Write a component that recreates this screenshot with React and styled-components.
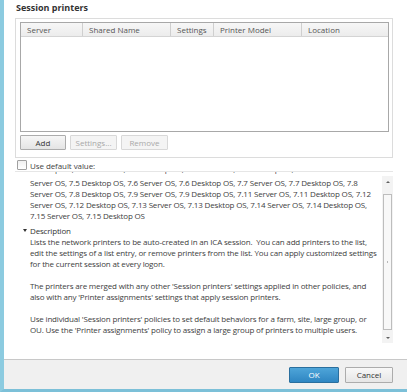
import React from 'react';
import styled, {createGlobalStyle} from 'styled-components';

const Global = createGlobalStyle`
  html, body {
    margin: 0;
    padding: 0;
    background: #ffffff;
  }
  * {
    box-sizing: border-box;
  }
`;

const Dialog = styled.div`
  width: 407px;
  height: 392px;
  display: flex;
  flex-direction: column;
  background: #ffffff;
  border-left: 4px solid #8ccbe0;
  border-bottom: 3px solid #7cc0d8;
  font-family: "Open Sans", "Noto Sans", sans-serif;
  font-size: 8px;
  color: #3a3a3a;
  overflow: hidden;
`;

const Body = styled.div`
  display: flex;
  flex-direction: column;
  padding: 2px 14px 0 11px;
`;

const Title = styled.div`
  font-weight: 700;
  font-size: 9px;
  line-height: 12px;
  color: #333;
  padding-left: 1px;
  height: 16px;
`;

const GroupBox = styled.div`
  border: 1px solid #dcdcdc;
  padding: 3px 3px 7px 4px;
  display: flex;
  flex-direction: column;
`;

const ListView = styled.div`
  height: 110px;
  border: 1px solid #a8a8a8;
  background: #fff;
`;

const HeaderRow = styled.div`
  display: grid;
  grid-template-columns: 62px 88px 43px 88px 1fr;
  height: 14px;
  background: linear-gradient(#f7f7f7, #ececec);
  border-bottom: 1px solid #d4d4d4;
`;

const HeaderCell = styled.div`
  padding-left: 6px;
  line-height: 13px;
  color: #555;
  border-right: ${p => (p.$last ? 'none' : '1px solid #cfcfcf')};
`;

const ButtonRow = styled.div`
  display: flex;
  gap: 4px;
  margin-top: 3px;
`;

const Button = styled.button`
  width: ${p => p.$w || 47}px;
  height: 15px;
  padding: 0;
  font-family: inherit;
  font-size: 8px;
  line-height: 13px;
  color: ${p => (p.disabled ? '#a8a8a8' : '#333')};
  background: ${p => (p.disabled ? '#f4f4f4' : 'linear-gradient(#f6f6f6, #e4e4e4)')};
  border: 1px solid ${p => (p.disabled ? '#d8d8d8' : '#acacac')};
  border-radius: 1px;
`;

const CheckRow = styled.label`
  display: flex;
  align-items: center;
  gap: 3px;
  height: 12px;
  margin-top: 1px;
  line-height: 11px;
  padding-left: 2px;
  color: #444;
  letter-spacing: -0.08px;
`;

const CheckBox = styled.span`
  width: 10px;
  height: 10px;
  border: 1px solid #a0a0a0;
  border-radius: 1px;
  background: linear-gradient(#f0f0f0, #ffffff);
`;

const TextBox = styled.div`
  height: 175px;
  border-top: 1px solid #e6e6e6;
  display: flex;
`;

const TextArea = styled.div`
  flex: 1;
  min-width: 0;
  overflow: hidden;
  padding: 4px 0 0 15px;
  line-height: 11px;
  letter-spacing: -0.17px;
  color: #404040;
`;

const Clipped = styled.div`
  margin: -13px 0 3px;
  white-space: nowrap;
`;

const Line = styled.div`
  white-space: nowrap;
`;

const Section = styled.div`
  margin-top: 4px;
`;

const SectionHead = styled.div`
  display: flex;
  align-items: center;
  margin-left: -7px;
  gap: 3px;
  color: #333;
`;

const Arrow = styled.span`
  width: 0;
  height: 0;
  border-left: 2.5px solid transparent;
  border-right: 2.5px solid transparent;
  border-top: 3px solid #333;
`;

const Para = styled.div`
  margin-bottom: ${p => (p.$last ? 0 : 11)}px;
`;

const ScrollBar = styled.div`
  width: 11px;
  flex: none;
  margin: 4px 0 3px;
  background: #f3f3f3;
  display: flex;
  flex-direction: column;
  align-items: center;
  padding: 3px 0 2px;
`;

const ScrollArrow = styled.span`
  width: 0;
  height: 0;
  border-left: 2px solid transparent;
  border-right: 2px solid transparent;
  ${p => (p.$down ? 'border-top: 2px solid #606060;' : 'border-bottom: 2px solid #606060;')}
  margin: 2px 0;
`;

const Thumb = styled.div`
  width: 9px;
  height: 138px;
  margin: 9px 0 5px;
  border: 1px solid #bdbdbd;
  background: #f8f8f8;
  display: flex;
  align-items: flex-end;
  justify-content: center;
  padding-bottom: 66px;
`;

const Grip = styled.span`
  width: 1px;
  height: 2px;
  background: #b8b8b8;
`;

const Footer = styled.div`
  height: 31px;
  margin-top: 13px;
  background: #f0f0f0;
  border-top: 1px solid #c8c8c8;
  display: flex;
  justify-content: flex-end;
  align-items: center;
  gap: 6px;
  padding: 0 14px 0 0;
`;

const DialogButton = styled.button`
  width: ${p => p.$w}px;
  height: 16px;
  padding: 0;
  font-family: inherit;
  font-size: 8px;
  line-height: 14px;
  border-radius: 1px;
  color: ${p => (p.$primary ? '#ffffff' : '#333')};
  background: ${p => (p.$primary ? 'linear-gradient(#4ea5d9, #2f86c2)' : 'linear-gradient(#f8f8f8, #e6e6e6)')};
  border: 1px solid ${p => (p.$primary ? '#2a6f9e' : '#acacac')};
`;

const columns = ['Server', 'Shared Name', 'Settings', 'Printer Model', 'Location'];

export default function App() {
  return (
    <>
      <Global/>
      <Dialog>
        <Body>
          <Title>Session printers</Title>
          <GroupBox>
            <ListView>
              <HeaderRow>
                {columns.map((c, i) => (
                  <HeaderCell key={c} $last={i === columns.length - 1}>{c}</HeaderCell>
                ))}
              </HeaderRow>
            </ListView>
            <ButtonRow>
              <Button $w={46}>Add</Button>
              <Button disabled>Settings...</Button>
              <Button disabled>Remove</Button>
            </ButtonRow>
          </GroupBox>
          <CheckRow>
            <CheckBox/>
            Use default value:
          </CheckRow>
          <TextBox>
            <TextArea>
              <Clipped>Desktop OS, 7.1 Server OS, 7.1 Desktop OS, 7.5 Server OS, 7.5 Desktop OS, 7.6 Server OS</Clipped>
              <Line>Server OS, 7.5 Desktop OS, 7.6 Server OS, 7.6 Desktop OS, 7.7 Server OS, 7.7 Desktop OS, 7.8</Line>
              <Line>Server OS, 7.8 Desktop OS, 7.9 Server OS, 7.9 Desktop OS, 7.11 Server OS, 7.11 Desktop OS, 7.12</Line>
              <Line>Server OS, 7.12 Desktop OS, 7.13 Server OS, 7.13 Desktop OS, 7.14 Server OS, 7.14 Desktop OS,</Line>
              <Line>7.15 Server OS, 7.15 Desktop OS</Line>
              <Section>
                <SectionHead><Arrow/>Description</SectionHead>
                <Para>
                  <Line>Lists the network printers to be auto-created in an ICA session.&nbsp; You can add printers to the list,</Line>
                  <Line>edit the settings of a list entry, or remove printers from the list. You can apply customized settings</Line>
                  <Line>for the current session at every logon.</Line>
                </Para>
                <Para>
                  <Line>The printers are merged with any other 'Session printers' settings applied in other policies, and</Line>
                  <Line>also with any 'Printer assignments' settings that apply session printers.</Line>
                </Para>
                <Para $last>
                  <Line>Use individual 'Session printers' policies to set default behaviors for a farm, site, large group, or</Line>
                  <Line>OU. Use the 'Printer assignments' policy to assign a large group of printers to multiple users.</Line>
                </Para>
              </Section>
            </TextArea>
            <ScrollBar>
              <ScrollArrow/>
              <Thumb><Grip/></Thumb>
              <ScrollArrow $down/>
            </ScrollBar>
          </TextBox>
        </Body>
        <Footer>
          <DialogButton $primary $w={50}>OK</DialogButton>
          <DialogButton $w={48}>Cancel</DialogButton>
        </Footer>
      </Dialog>
    </>
  );
}
